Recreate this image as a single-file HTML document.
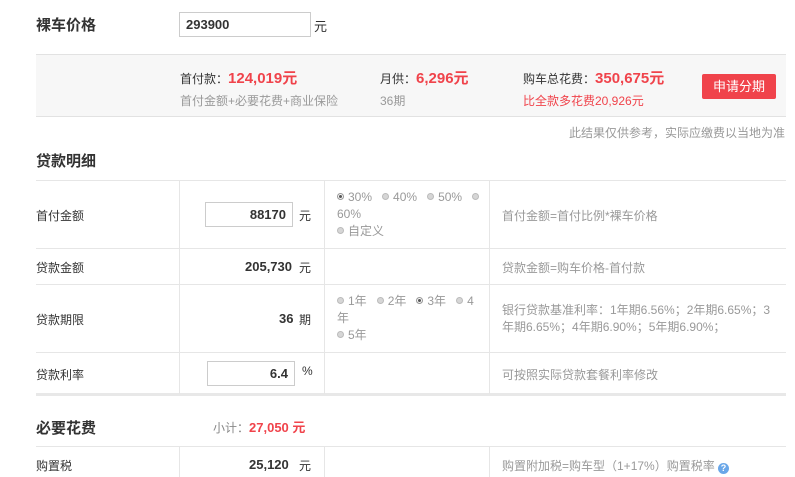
<!DOCTYPE html>
<html><head><meta charset="utf-8"><style>
*{margin:0;padding:0;box-sizing:border-box}
body{width:795px;height:477px;overflow:hidden;background:#fff;position:relative;font-family:"Liberation Sans","Microsoft YaHei","Noto Sans CJK SC",sans-serif;font-size:12px;color:#333}
.a{position:absolute;white-space:nowrap}
.h{font-size:15px;font-weight:bold;color:#333}
.red{color:#f0434b}
.g{color:#999}
.hl{position:absolute;left:36px;width:750px;height:1px;background:#e6e6e6}
.vl{position:absolute;width:1px;background:#e6e6e6}
.inp{position:absolute;border:1px solid #ccc;background:#fff;font-weight:bold;font-size:13px;padding:0 6px;line-height:23px;height:25px}
.r{display:inline-block;width:7px;height:7px;border-radius:50%;background:#d6d6d6;border:1px solid #bbb;margin-right:4px;vertical-align:1px}
.r.on{background:#fff;border:1px solid #999;box-shadow:inset 0 0 0 1px #fff,inset 0 0 0 3px #555}
.opt{position:absolute;left:337px;width:150px;color:#999;line-height:17px;white-space:normal;font-size:12px}
.b{font-weight:bold}
</style></head><body>
<div class="a h" style="left:36px;top:14px">裸车价格</div>
<div class="inp" style="left:179px;top:12px;width:132px">293900</div>
<div class="a" style="left:314px;top:16px;font-size:13px">元</div>

<div class="a" style="left:36px;top:54px;width:750px;height:63px;background:#f7f7f7;border-top:1px solid #e2e2e2;border-bottom:1px solid #e2e2e2"></div>
<div class="a" style="left:180px;top:67px;font-size:12px">首付款：<span class="red b" style="font-size:15px">124,019元</span></div>
<div class="a g" style="left:180px;top:92px">首付金额+必要花费+商业保险</div>
<div class="a" style="left:380px;top:67px">月供：<span class="red b" style="font-size:15px">6,296元</span></div>
<div class="a g" style="left:380px;top:92px">36期</div>
<div class="a" style="left:523px;top:67px">购车总花费：<span class="red b" style="font-size:15px">350,675元</span></div>
<div class="a red" style="left:523px;top:92px">比全款多花费20,926元</div>
<div class="a" style="left:702px;top:74px;width:74px;height:25px;background:#f0434b;color:#fff;border-radius:2px;text-align:center;line-height:25px;font-size:13px">申请分期</div>
<div class="a g" style="left:569px;top:124px">此结果仅供参考，实际应缴费以当地为准</div>

<div class="a h" style="left:36px;top:150px">贷款明细</div>
<div class="hl" style="top:180px"></div>
<div class="hl" style="top:248px"></div>
<div class="hl" style="top:284px"></div>
<div class="hl" style="top:352px"></div>
<div class="hl" style="top:393px;height:3px;background:#e8e8e8"></div>
<div class="vl" style="left:179px;top:180px;height:214px"></div>
<div class="vl" style="left:324px;top:180px;height:214px"></div>
<div class="vl" style="left:489px;top:180px;height:214px"></div>

<div class="a" style="left:36px;top:207px">首付金额</div>
<div class="inp" style="left:205px;top:202px;width:88px;text-align:right">88170</div>
<div class="a" style="left:299px;top:207px">元</div>
<div class="opt" style="top:189px"><span class="r on"></span>30% &nbsp;&nbsp;<span class="r"></span>40% &nbsp;&nbsp;<span class="r"></span>50% &nbsp;&nbsp;<span class="r"></span><br>60%<br><span class="r"></span>自定义</div>
<div class="a g" style="left:502px;top:207px">首付金额=首付比例*裸车价格</div>

<div class="a" style="left:36px;top:259px">贷款金额</div>
<div class="a b" style="left:245px;top:259px;font-size:13px">205,730</div>
<div class="a" style="left:299px;top:259px">元</div>
<div class="a g" style="left:502px;top:259px">贷款金额=购车价格-首付款</div>

<div class="a" style="left:36px;top:311px">贷款期限</div>
<div class="a b" style="left:279px;top:311px;font-size:13px">36</div>
<div class="a" style="left:299px;top:311px">期</div>
<div class="opt" style="top:293px"><span class="r"></span>1年 &nbsp;&nbsp;<span class="r"></span>2年 &nbsp;&nbsp;<span class="r on"></span>3年 &nbsp;&nbsp;<span class="r"></span>4<br>年<br><span class="r"></span>5年</div>
<div class="a g" style="left:502px;top:302px;line-height:17px">银行贷款基准利率：1年期6.56%；2年期6.65%；3<br>年期6.65%；4年期6.90%；5年期6.90%；</div>

<div class="a" style="left:36px;top:366px">贷款利率</div>
<div class="inp" style="left:207px;top:361px;width:88px;text-align:right">6.4</div>
<div class="a" style="left:302px;top:364px">%</div>
<div class="a g" style="left:502px;top:366px">可按照实际贷款套餐利率修改</div>

<div class="a h" style="left:36px;top:417px">必要花费</div>
<div class="a" style="left:213px;top:417px;color:#888">小计：<span class="red b" style="font-size:13px">27,050 元</span></div>
<div class="hl" style="top:446px"></div>
<div class="vl" style="left:179px;top:446px;height:31px"></div>
<div class="vl" style="left:324px;top:446px;height:31px"></div>
<div class="vl" style="left:489px;top:446px;height:31px"></div>
<div class="a" style="left:36px;top:457px">购置税</div>
<div class="a b" style="left:249px;top:457px;font-size:13px">25,120</div>
<div class="a" style="left:299px;top:457px">元</div>
<div class="a g" style="left:502px;top:457px">购置附加税=购车型（1+17%）购置税率 <span style="display:inline-block;width:11px;height:11px;border-radius:50%;background:#6aa7e8;color:#fff;font-size:9px;line-height:11px;text-align:center;font-weight:bold;vertical-align:-1px">?</span></div>
</body></html>
